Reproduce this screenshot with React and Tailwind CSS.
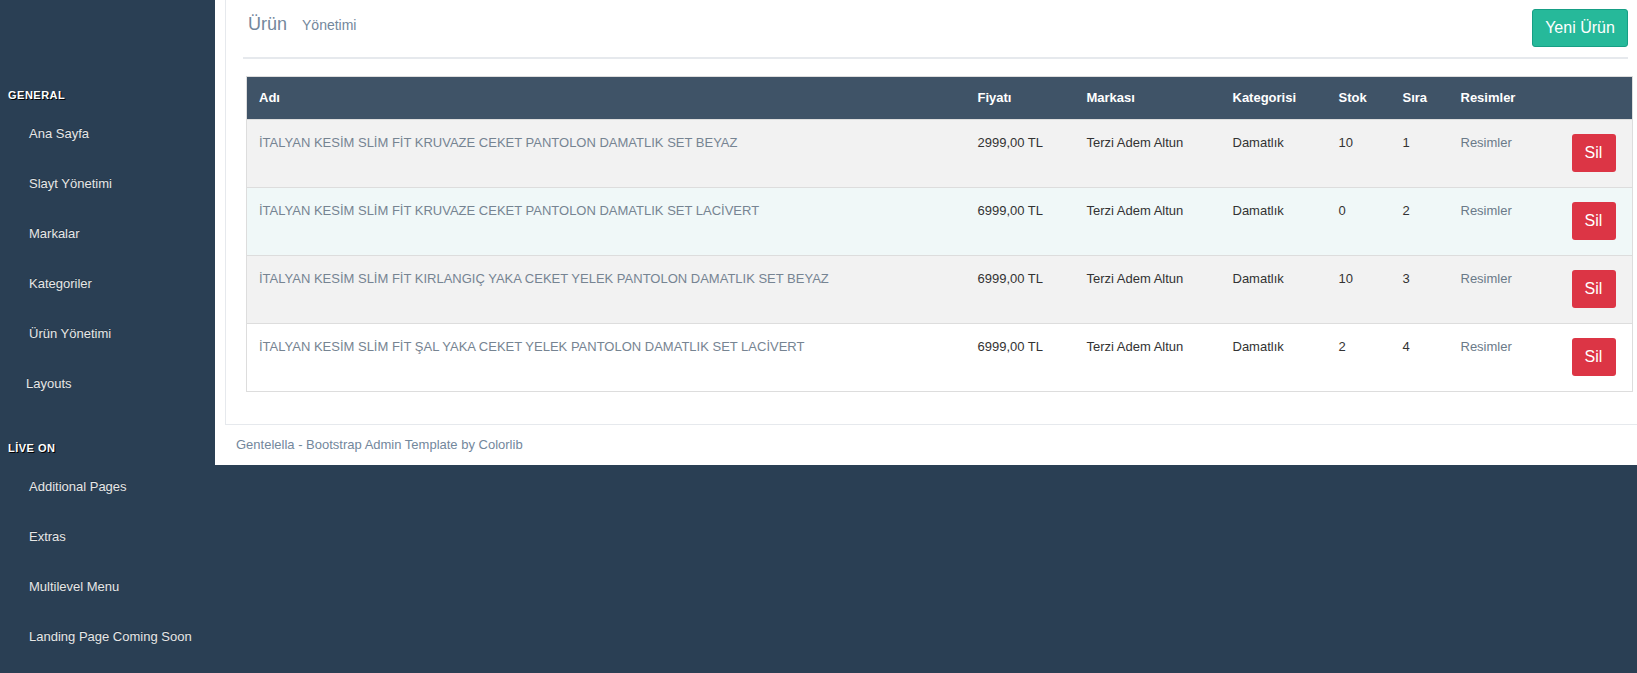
import React from "react";

const generalMenu = ["Ana Sayfa", "Slayt Yönetimi", "Markalar", "Kategoriler", "Ürün Yönetimi"];
const liveMenu = ["Additional Pages", "Extras", "Multilevel Menu", "Landing Page Coming Soon"];

const products = [
    { name: "İTALYAN KESİM SLİM FİT KRUVAZE CEKET PANTOLON DAMATLIK SET BEYAZ", price: "2999,00 TL", stock: 10, order: 1, bg: "bg-[#f2f2f2]" },
    { name: "İTALYAN KESİM SLİM FİT KRUVAZE CEKET PANTOLON DAMATLIK SET LACİVERT", price: "6999,00 TL", stock: 0, order: 2, bg: "bg-[#f0f8f8]" },
    { name: "İTALYAN KESİM SLİM FİT KIRLANGIÇ YAKA CEKET YELEK PANTOLON DAMATLIK SET BEYAZ", price: "6999,00 TL", stock: 10, order: 3, bg: "bg-[#f2f2f2]" },
    { name: "İTALYAN KESİM SLİM FİT ŞAL YAKA CEKET YELEK PANTOLON DAMATLIK SET LACİVERT", price: "6999,00 TL", stock: 2, order: 4, bg: "bg-white" },
];

const SectionTitle = ({ children, className = "" }) => (
    <h3 className={`h-[18px] leading-[18px] mb-[5px] pl-[8px] text-[11px] font-bold uppercase tracking-[0.5px] text-white [text-shadow:1px_1px_#000] ${className}`}>
        {children}
    </h3>
);

const MenuItem = ({ label, className = "pl-[29px]" }) => (
    <a className={`h-[50px] flex items-center text-[13px] text-[#e7e7e7] [text-shadow:0_-1px_0_rgba(0,0,0,0.25)] ${className}`}>
        {label}
    </a>
);

const App = () => {
    return (
        <div className="flex w-[1637px] h-[673px] overflow-hidden bg-[#2a3f54] font-['Liberation_Sans',Arial,sans-serif]">
            {/* Sidebar */}
            <aside className="w-[215px] flex-shrink-0 pt-[86px]">
                <SectionTitle>General</SectionTitle>
                {generalMenu.map((item) => (
                    <MenuItem key={item} label={item} />
                ))}
                <MenuItem label="Layouts" className="pl-[26px]" />

                <SectionTitle className="mt-[30px] normal-case">LİVE ON</SectionTitle>
                {liveMenu.map((item) => (
                    <MenuItem key={item} label={item} />
                ))}
            </aside>

            {/* Icerik */}
            <main className="flex-1 self-start bg-white pl-[10px]">
                <div className="border-l border-b border-[#e6e9ed] pl-[17px] pr-[4px] pb-[32px]">
                    <div className="flex justify-between items-start h-[59px] border-b-2 border-[#e6e9ed] mr-[5px]">
                        <h2 className="pt-[13px] pl-[5px] text-[18px] leading-[22px] text-[#73879c]">
                            Ürün <small className="ml-[10px] text-[14px] text-[#73879c]">Yönetimi</small>
                        </h2>
                        <button className="mt-[9px] h-[38px] w-[96px] rounded-[3px] bg-[#26b99a] border border-[#169f85] text-white text-[16px]">
                            Yeni Ürün
                        </button>
                    </div>

                    <table className="mt-[17px] ml-[3px] w-[1387px] border border-[#dddddd] border-collapse text-[13px] leading-[18.5px]">
                        <thead>
                            <tr className="h-[43px] bg-[#3f5367] text-white font-bold text-left">
                                <th className="w-[719px] px-[12px]">Adı</th>
                                <th className="w-[109px] px-[12px]">Fiyatı</th>
                                <th className="w-[146px] px-[12px]">Markası</th>
                                <th className="w-[106px] px-[12px]">Kategorisi</th>
                                <th className="w-[64px] px-[12px]">Stok</th>
                                <th className="w-[58px] px-[12px]">Sıra</th>
                                <th className="w-[111px] px-[12px]">Resimler</th>
                                <th className="px-[12px]"></th>
                            </tr>
                        </thead>
                        <tbody>
                            {products.map((p) => (
                                <tr key={p.order} className={`h-[68px] border-t border-[#dddddd] align-top ${p.bg}`}>
                                    <td className="px-[12px] pt-[14px] text-[#768492]">{p.name}</td>
                                    <td className="px-[12px] pt-[14px] text-[#333]">{p.price}</td>
                                    <td className="px-[12px] pt-[14px] text-[#333]">Terzi Adem Altun</td>
                                    <td className="px-[12px] pt-[14px] text-[#333]">Damatlık</td>
                                    <td className="px-[12px] pt-[14px] text-[#333]">{p.stock}</td>
                                    <td className="px-[12px] pt-[14px] text-[#333]">{p.order}</td>
                                    <td className="px-[12px] pt-[14px] text-[#6b7a89]">Resimler</td>
                                    <td className="px-[12px] pt-[14px]">
                                        <button className="h-[38px] w-[44px] rounded-[3px] bg-[#dc3545] text-white text-[16px]">
                                            Sil
                                        </button>
                                    </td>
                                </tr>
                            ))}
                        </tbody>
                    </table>
                </div>

                <footer className="h-[40px] flex items-center pl-[11px] text-[13px] text-[#73879c]">
                    Gentelella - Bootstrap Admin Template by Colorlib
                </footer>
            </main>
        </div>
    );
};

export default App;
